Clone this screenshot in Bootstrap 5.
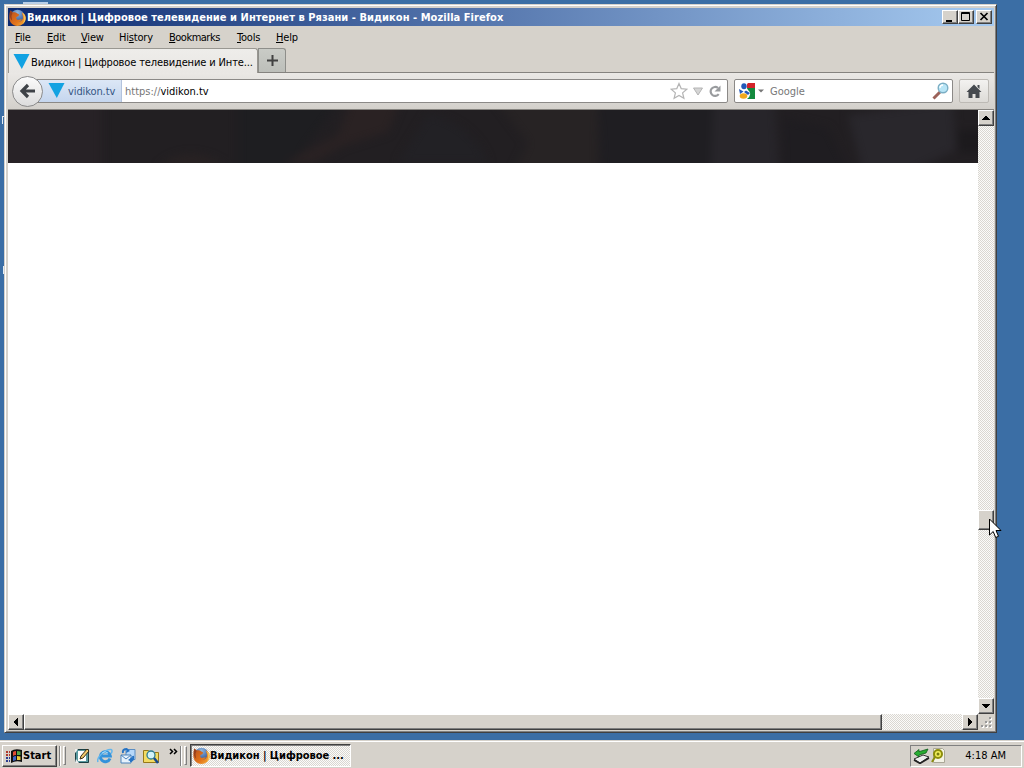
<!DOCTYPE html>
<html lang="ru">
<head>
<meta charset="utf-8">
<meta name="viewport" content="width=device-width, initial-scale=1">
<title>Видикон - Mozilla Firefox</title>
<link rel="stylesheet" href="https://cdn.jsdelivr.net/npm/bootstrap@5.3.0/dist/css/bootstrap.min.css">
<script src="https://cdn.jsdelivr.net/npm/bootstrap@5.3.0/dist/js/bootstrap.bundle.min.js"></script>
<style>
body{width:1024px;height:768px;background:#3b6ea5;font:11px/14px "DejaVu Sans Condensed","Noto Sans",sans-serif;color:#000;white-space:nowrap}
svg{display:block;flex:none}
.desk{height:740px;padding:4px 0 0 4px}
.win{width:993px;height:729px;background:#d6d2cb;border:1px solid #d6d2cb;border-right-color:#404040;border-bottom-color:#404040;box-shadow:inset 1px 1px #fff,inset -1px -1px #808080;padding:3px 2px 2px 3px}
.titlebar{height:18px;background:linear-gradient(90deg,#0c2a70,#a6caf0);color:#fff;font-weight:700;padding:0 2px 0 1px}
.titlebar span{letter-spacing:.05px;margin-left:1px;padding-top:1px}
.raised{background:#d6d2cb;border:1px solid #fff;border-right-color:#404040;border-bottom-color:#404040;box-shadow:inset -1px -1px #808080}
.capbtn{width:16px;height:14px}
.menus{height:22px;padding:2px 0 0 7px}
.menus span{flex:none;letter-spacing:-.2px}
.menus .tight{letter-spacing:-.5px}
.menus u{text-underline-offset:1px}
.tabs{height:25px;border-bottom:1px solid #85837f}
.tab-on{width:250px;height:25px;margin-bottom:-1px;background:linear-gradient(#eeedea,#e9e7e4);border:1px solid #999791;border-bottom:0;border-radius:3px 3px 0 0;padding:2px 0 0 4px}
.tab-on span{letter-spacing:-.13px;margin-left:1px;padding-top:1px}
.tab-new{width:28px;height:24px;background:linear-gradient(#c9cbc6,#bdbfba);border:1px solid #8e8e8a;border-bottom:0;border-radius:0 3px 0 0}
.navrow{height:37px;background:linear-gradient(#eae8e5,#d3d0cb);border-bottom:1px solid #85837f;padding-left:4px}
.navrow span{padding-top:1px}
.navrow span span{padding-top:0}
.back{width:31px;height:31px;border-radius:50%;background:linear-gradient(#fbfbfb,#dcdcdc);border:1px solid #8b8b8b;z-index:1}
.url{width:694px;height:24px;margin-left:-9px;background:#fff;border:1px solid #8b8987;border-radius:2px}
.ident{width:87px;background:linear-gradient(#dce7f6,#c5d6ee);border-right:1px solid #b3c3dd;color:#355583;padding-left:13px}
.ident span{margin-left:3px;letter-spacing:-.1px}
.hint{color:#777}
.search{width:219px;height:24px;margin-left:6px;background:#fff;border:1px solid #8b8987;border-radius:2px;padding:0 3px 0 4px}
.homebtn{width:30px;height:24px;margin-left:6px;background:linear-gradient(#f3f2f0,#dddbd7);border:1px solid #bdbab5;border-radius:2px}
.page{width:970px;height:604px;background:#fff}
.hero{height:53px}
.dither{background:repeating-conic-gradient(#fbfbfa 0 25%,#dad7d1 0 50%) 0 0/2px 2px}
.vbar{width:16px;height:604px}
.vbar .raised,.arrow{width:16px;height:16px}
.hbar{height:16px}
.hthumb{width:858px;height:16px}
.vbar .vthumb{height:20px;margin-top:384px}
.tasks{height:28px;background:#d6d2cb;border-top:1px solid #d6d2cb;box-shadow:inset 0 1px #fff;padding:2px 2px 0 2px}
.startbtn{width:55px;height:22px;font-weight:700;padding-left:3px}
.grip{width:3px;height:19px;border:1px solid #fff;border-right-color:#808080;border-bottom-color:#808080;margin-left:2px}
.sep{width:2px;height:20px;border-left:1px solid #808080;border-right:1px solid #fff;margin-left:2px}
.task{width:161px;height:23px;border:1px solid #404040;border-right-color:#fff;border-bottom-color:#fff;box-shadow:inset 1px 1px #808080;font-weight:700;padding-left:2px;margin-left:3px}
.task span{padding-top:1px;letter-spacing:-.04px}
.tray{width:112px;height:22px;border:1px solid #808080;border-right-color:#fff;border-bottom-color:#fff;padding:0 15px 0 2px}
.tray span{padding-top:1px}
.cursor{left:989px;top:518px}
</style>
</head>
<body class="m-0 overflow-hidden position-relative">
<svg width="0" height="0" class="position-absolute">
<defs>
<radialGradient id="globe" cx=".5" cy=".2" r=".8"><stop offset="0" stop-color="#8fb7df"/><stop offset="1" stop-color="#1c438c"/></radialGradient>
<linearGradient id="fur" x1="0" y1="0" x2="1" y2="1"><stop offset="0" stop-color="#b9501f"/><stop offset=".6" stop-color="#e2741b"/><stop offset="1" stop-color="#f7b53a"/></linearGradient>
<symbol id="fox" viewBox="0 0 16 16"><circle cx="8" cy="7.500" r="6.800" fill="url(#globe)"/><path d="M1.300 1.500 3.500 3.300C5 2.600 6.500 3 7.500 4L9.500 5.200 9 6.500 7 7.500c-.8 1.600.5 3 2.200 2.700 1.300-.3 2-.9 2.800-.5-.6 1.500-2 2.100-3.300 2.100 2.800.4 4.600-1.700 4.500-4.600L12 3C15 4.500 16 7 15.700 9.500 15 13.500 12 16 8 16 3.500 16 .4 12.500.3 8.500.3 5.500.8 3.500 1.300 1.500Z" fill="url(#fur)"/><path d="M1.300 1.500 3.300 3.500 2.300 6.500 3 11C.8 9 0 5 1.300 1.500Z" fill="#97401d"/><path d="M12.500 3.500C15 4.500 16 7 15.700 9.500 15.300 11.500 14.300 13.200 13 14.200c1.500-3 1.500-7-.5-10.700Z" fill="#f5c255"/></symbol>
<symbol id="tri" viewBox="0 0 16 16"><path d="M0 0H16L8.300 15Z" fill="#12a2e2"/></symbol>
</defs>
</svg>
<svg class="position-absolute" style="left:23px;top:2px" width="25" height="2"><path d="M0 0h25v2H0z" fill="#b9cfe8"/></svg>
<svg class="position-absolute" style="left:2px;top:116px" width="2" height="8"><path d="M0 0h2v1H1v7H0z" fill="#e4edf5"/></svg>
<svg class="position-absolute" style="left:3px;top:266px" width="1" height="8"><path d="M0 0h1v8H0z" fill="#e4edf5"/></svg>

<div class="desk">
<main class="win">
  <div class="titlebar d-flex align-items-center">
    <svg width="17" height="17"><use href="#fox"/></svg>
    <span>Видикон | Цифровое телевидение и Интернет в Рязани - Видикон - Mozilla Firefox</span>
    <div class="d-flex ms-auto">
      <div class="raised capbtn"><svg width="14" height="12"><path d="M3 9h6v2H3z"/></svg></div>
      <div class="raised capbtn"><svg width="14" height="12"><path d="M2.500 1.500h8v8h-8zM2 2.500h9" fill="none" stroke="#000"/></svg></div>
      <div class="raised capbtn" style="margin-left:2px"><svg width="14" height="12"><path d="M3.500 2 10.500 9M10.500 2 3.500 9" stroke="#000" stroke-width="1.700"/></svg></div>
    </div>
  </div>
  <nav class="menus d-flex align-items-center">
    <span style="width:32px"><u>F</u>ile</span><span style="width:34px"><u>E</u>dit</span><span style="width:38px"><u>V</u>iew</span><span style="width:50px">Hi<u>s</u>tory</span><span class="tight" style="width:68px"><u>B</u>ookmarks</span><span style="width:39px"><u>T</u>ools</span><span><u>H</u>elp</span>
  </nav>
  <div class="tabs d-flex">
    <div class="tab-on d-flex align-items-center">
      <svg width="17" height="16"><use href="#tri"/></svg>
      <span>Видикон | Цифровое телевидение и Инте...</span>
    </div>
    <div class="tab-new d-flex align-items-center justify-content-center"><svg width="11" height="11"><path d="M5.500 0v11M0 5.500h11" stroke="#414141" stroke-width="2"/></svg></div>
  </div>
  <div class="navrow d-flex align-items-center">
    <div class="back d-flex align-items-center justify-content-center"><svg width="17" height="16"><path d="M9 2 3 8 9 14M3 8h13" fill="none" stroke="#3e4247" stroke-width="3.200"/></svg></div>
    <div class="url d-flex align-items-stretch">
      <div class="ident d-flex align-items-center"><svg width="17" height="16"><use href="#tri"/></svg><span>vidikon.tv</span></div>
      <div class="d-flex align-items-center flex-grow-1" style="padding:0 1px 0 3px"><span><span class="hint">https://</span>vidikon.tv</span>
        <svg class="ms-auto" width="18" height="18"><path d="M9 1.500 11.200 6.600 16.800 7.200 12.600 10.900 13.900 16.300 9 13.500 4.100 16.300 5.400 10.900 1.200 7.200 6.800 6.600Z" fill="#fff" stroke="#b4b4b4" stroke-width="1.200"/></svg>
        <svg width="18" height="18"><path d="M5.500 6h9L10 13Z" fill="#d5d5d5" stroke="#b4b4b4"/></svg>
        <svg width="20" height="18"><path d="M12.700 12.200A4.500 4.500 0 1 1 12 6" fill="none" stroke="#999b9e" stroke-width="2.200"/><path d="M14.500 3.500v6h-6Z" fill="#999b9e"/></svg>
      </div>
    </div>
    <div class="search d-flex align-items-center">
      <svg width="16" height="16"><path d="M8 0h8v6H8z" fill="#d3232a"/><path d="M8 5h8v11H8z" fill="#138a3e"/><path d="M9 0Q6 3 9 7Q14 11 8 16L3 16 7 8 2 1Z" fill="#fff"/><ellipse cx="5" cy="3.300" rx="2.700" ry="3" fill="#2459b8"/><path d="M0 6 4.500 8.500 1 11Z" fill="#2459b8"/><ellipse cx="4.500" cy="13" rx="3.800" ry="2.700" fill="#f0a81c"/><path d="M7 7.500 11 10 9 12 5 9Z" fill="#2459b8"/></svg>
      <svg width="15" height="16"><path d="M3 6.500h6L6 9.500Z" fill="#777"/></svg>
      <span class="hint">Google</span>
      <svg class="ms-auto" width="17" height="18"><path d="M1.500 16.500 8 10" stroke="#9b6259" stroke-width="3"/><circle cx="11" cy="6" r="4.800" fill="#b8e5f6" stroke="#7baec4" stroke-width="1.400"/><path d="M8 6a3 3 0 0 1 3-3" fill="none" stroke="#fff" stroke-width="1.300"/></svg>
    </div>
    <div class="homebtn d-flex align-items-center justify-content-center"><svg width="16" height="15"><path d="M8 .5 15.500 8H13.500V14H9.500V10H6.500V14H2.500V8H.5ZM11.500 1h2v4l-2-2Z" fill="#45494e"/></svg></div>
  </div>
  <div class="d-flex">
    <div class="page">
      <svg class="hero" width="970" height="53" viewBox="0 0 970 53"><defs><filter id="soft" x="-5%" y="-40%" width="110%" height="180%" color-interpolation-filters="sRGB"><feGaussianBlur stdDeviation="4"/></filter></defs><path d="M0 0h970v53H0z" fill="#221f22"/><g filter="url(#soft)"><path d="M-20-20h114v93H-20z" fill="#272226"/><path d="M230-20h110l-70 93h-40z" fill="#1e1e21"/><path d="M345-15h50l-15 37-45 14-30 17h-30l55-28Z" fill="#2a2223"/><path d="M150 58q30-28 70 0Z" fill="#282223"/><path d="M480-20h110v93h-90l20-40Z" fill="#272324"/><path d="M420 4q45 10 60 49h-90Z" fill="#222125"/><path d="M590-15h115v88H594Z" fill="#1f1e22"/><path d="M706-20h60l6 93h-70Z" fill="#27252a"/><path d="M775 8 820 18 842 63h-68Z" fill="#1f1d21"/><path d="M840 5 945-10 948 40 900 63h-45Z" fill="#29272c"/><path d="M950 20h30v22h-30z" fill="#1c1a1d"/></g></svg>
    </div>
    <div class="vbar dither d-flex flex-column">
      <div class="raised"><svg width="14" height="14"><path d="M3 9h8v-1h-1V7H9V6H8V5H6v1H5v1H4v1H3Z"/></svg></div>
      <div class="raised vthumb"></div>
      <div class="raised mt-auto"><svg width="14" height="14"><path d="M3 5h8v1h-1v1H9v1H8v1H6V8H5V7H4V6H3Z"/></svg></div>
    </div>
  </div>
  <div class="hbar d-flex">
    <div class="dither d-flex" style="width:970px">
      <div class="raised arrow"><svg width="14" height="14"><path d="M9 3v8H8v-1H7V9H6V8H5V6h1V5h1V4h1V3Z"/></svg></div>
      <div class="raised hthumb"></div>
      <div class="raised arrow ms-auto"><svg width="14" height="14"><path d="M5 3v8h1v-1h1V9h1V8h1V6H8V5H7V4H6V3Z"/></svg></div>
    </div>
    <svg width="16" height="16"><g fill="#fff"><path d="M12 4h2v2h-2zM8 8h2v2H8zM12 8h2v2h-2zM4 12h2v2H4zM8 12h2v2H8zM12 12h2v2h-2z"/></g><g fill="#999"><path d="M11 3h2v2h-2zM7 7h2v2H7zM11 7h2v2h-2zM3 11h2v2H3zM7 11h2v2H7zM11 11h2v2h-2z"/></g></svg>
  </div>
</main>
</div>

<footer class="tasks d-flex align-items-center">
  <div class="raised startbtn d-flex align-items-center">
    <svg width="17" height="16"><path d="M5 3Q9 0 16 2V14Q10 12 5 15Z" fill="#111"/><path d="M7 4Q8 3 10 3V7Q8 7 7 8Z" fill="#e24c32"/><path d="M11 3 14.500 3.500V7L11 7Z" fill="#52a84a"/><path d="M7 9Q8 8 10 8V12L7 13Z" fill="#3e66c6"/><path d="M11 8 14.500 8.500V12L11 12Z" fill="#ecc937"/><path d="M0 4h2M3 4h1M0 7h2M3 7h1" stroke="#b03a2c" stroke-width="2"/><path d="M0 10h2M3 10h1M0 13h2M3 13h1" stroke="#2b3c90" stroke-width="2"/></svg>
    <span>Start</span>
  </div>
  <div class="sep"></div><div class="grip"></div>
  <div class="d-flex" style="margin-left:8px;gap:7px">
    <svg width="16" height="16"><path d="M1.500 1.500h13v13h-13z" fill="#5a9aa0" stroke="#193f43"/><path d="M4 3h8v10H4z" fill="#fff"/><path d="M1 1h3L2 4 1 5ZM1 15h4L2 11Z" fill="#eee"/><path d="M6 11 7 8 13 1l2 2-6 7Z" fill="#efc96b" stroke="#3b2e16"/></svg>
    <svg width="16" height="16"><path d="M13 10.500A5 5 0 1 1 13.300 8H5" fill="none" stroke="#3292db" stroke-width="3"/><path d="M1 14C-1 10 8 1 14 1.500 16 2 14.500 5 14 5.500" fill="none" stroke="#62b6ed" stroke-width="1.500"/><path d="M5 5Q8 2.500 11 5" fill="none" stroke="#a4dcfa"/></svg>
    <svg width="16" height="16"><path d="M6 1.500h9v10H6z" fill="#b6d8fa" stroke="#5a8dc3"/><path d="M1 7h10v8H1z" fill="#e7f2fc" stroke="#4d83bb"/><path d="M1 7l5 4 5-4" fill="none" stroke="#4d83bb"/><path d="M3 5Q2 1 7 1M13 8q1 5-3 5" fill="none" stroke="#2673c4" stroke-width="2"/><path d="M7 0l3 3-4 2ZM8 12l4-3v5Z" fill="#2673c4"/></svg>
    <svg width="16" height="16"><path d="M.5 2.500h5l2 2h8v10H.5z" fill="#f3db63" stroke="#96791a"/><circle cx="8" cy="7" r="4" fill="#d3f3fa" stroke="#2c7b91" stroke-width="1.300"/><path d="m11 10 4 5" stroke="#17498f" stroke-width="2.500"/></svg>
  </div>
  <svg width="9" height="16" style="margin-left:10px;margin-bottom:6px"><path d="m1 4 2.500 2.500L1 9M5 4l2.500 2.500L5 9" fill="none" stroke="#000" stroke-width="1.500"/></svg>
  <div class="sep"></div><div class="grip"></div>
  <div class="task dither d-flex align-items-center"><svg width="17" height="17"><use href="#fox"/></svg><span>Видикон | Цифровое ...</span></div>
  <div class="tray d-flex align-items-center ms-auto">
    <svg width="17" height="16"><path d="M1 11 10 7l6 2-9 6Z" fill="#eee" stroke="#333"/><path d="m1 12 6 3.500L16 10" fill="none" stroke="#222" stroke-width="1.500"/><path d="M1 5.500 6 1.500v2.200L15 1l-2 4-7 2v2Z" fill="#28ad32" stroke="#0d5a18" stroke-width=".8"/></svg>
    <svg width="16" height="16"><path d="M3.500.5h9l2 2v12h-11z" fill="#f4f3e6" stroke="#a9a797"/><circle cx="8" cy="6" r="4" fill="#f3ef5d" stroke="#8c8d0c" stroke-width="2"/><circle cx="8" cy="6" r="1.500" fill="#777b10"/><path d="M5 9 2 14" stroke="#8c8d0c" stroke-width="2"/></svg>
    <span class="ms-auto">4:18 AM</span>
  </div>
</footer>
<svg class="cursor position-absolute" width="13" height="21"><path d="M.5 1V17L4.200 13.500 6.700 19.500 9.500 18.300 7 12.500H12Z" fill="#fff" stroke="#000"/></svg>
</body>
</html>
